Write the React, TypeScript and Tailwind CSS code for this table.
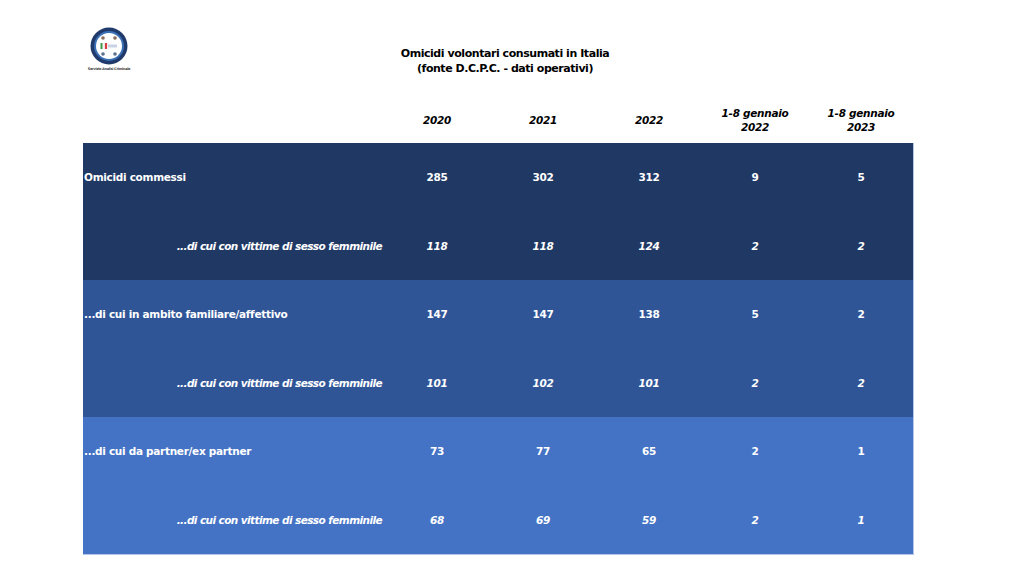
const years = ["2020", "2021", "2022"];

const bands = [
  {
    bg: "bg-[#203864]",
    label: "Omicidi commessi",
    main: ["285", "302", "312", "9", "5"],
    sub: ["118", "118", "124", "2", "2"],
  },
  {
    bg: "bg-[#2f5597]",
    label: "...di cui in ambito familiare/affettivo",
    main: ["147", "147", "138", "5", "2"],
    sub: ["101", "102", "101", "2", "2"],
  },
  {
    bg: "bg-[#4472c4]",
    label: "...di cui da partner/ex partner",
    main: ["73", "77", "65", "2", "1"],
    sub: ["68", "69", "59", "2", "1"],
  },
];

function Logo() {
  return (
    <div className="flex flex-col items-center w-[46px]">
      <svg width="38" height="38" viewBox="0 0 38 38">
        <circle cx="19" cy="19" r="18.5" fill="#1f3a6b" />
        <circle cx="19" cy="19" r="15" fill="#3b6fb5" />
        <circle cx="19" cy="19" r="13" fill="#ffffff" />
        <rect x="10.5" y="16" width="2.2" height="6" fill="#3a9a4a" />
        <rect x="12.7" y="16" width="2.2" height="6" fill="#f4f4f4" />
        <rect x="14.9" y="16" width="2.2" height="6" fill="#d64040" />
        <rect x="18" y="17.5" width="9" height="3" fill="#c9d3e6" />
        <circle cx="13" cy="11" r="1.8" fill="#8a6d5a" />
        <circle cx="25" cy="11" r="1.8" fill="#8a6d5a" />
        <circle cx="13" cy="27" r="1.8" fill="#5a6f8a" />
        <circle cx="25" cy="27" r="1.8" fill="#5a6f8a" />
      </svg>
      <div className="mt-[2px] text-[3.5px] leading-[4px] text-[#444] whitespace-nowrap font-['DejaVu_Sans',sans-serif]">
        Servizio Analisi Criminale
      </div>
    </div>
  );
}

function Row({
  label,
  values,
  sub,
}: {
  label: string;
  values: string[];
  sub?: boolean;
}) {
  return (
    <div className="grid grid-cols-[301px_repeat(5,106px)] h-[68.5px] items-center text-white">
      <div
        className={
          sub
            ? "text-right pr-[2px] italic tracking-[-0.58px]"
            : "text-left pl-[1px]"
        }
      >
        {label}
      </div>
      {values.map((v, i) => (
        <div key={i} className={sub ? "text-center italic" : "text-center"}>
          {v}
        </div>
      ))}
    </div>
  );
}

export default function App() {
  return (
    <div className="w-[1024px] h-[576px] bg-white font-['DejaVu_Sans',sans-serif] font-bold text-[10.5px] leading-[14px] tracking-[-0.3px] text-black">
      <div className="pl-[83px]">
        <div className="flex h-[98px]">
          <div className="pt-[27px] pl-[3px] w-[80px]">
            <Logo />
          </div>
          <div className="w-[300px] ml-[192px] pt-[46px] text-center text-[11px] leading-[15px] tracking-[-0.45px]">
            <div>Omicidi volontari consumati in Italia</div>
            <div>(fonte D.C.P.C. - dati operativi)</div>
          </div>
        </div>
        <div className="grid grid-cols-[301px_repeat(5,106px)] h-[45px] pb-[2px] items-center italic">
          <div />
          {years.map((y) => (
            <div key={y} className="text-center">
              {y}
            </div>
          ))}
          <div className="text-center">
            1-8 gennaio
            <br />
            2022
          </div>
          <div className="text-center">
            1-8 gennaio
            <br />
            2023
          </div>
        </div>
        <div className="w-[831px] border-r border-b border-[#b4c7e7]">
          {bands.map((b) => (
            <div key={b.label} className={b.bg}>
              <Row label={b.label} values={b.main} />
              <Row
                label="...di cui con vittime di sesso femminile"
                values={b.sub}
                sub
              />
            </div>
          ))}
        </div>
      </div>
    </div>
  );
}
